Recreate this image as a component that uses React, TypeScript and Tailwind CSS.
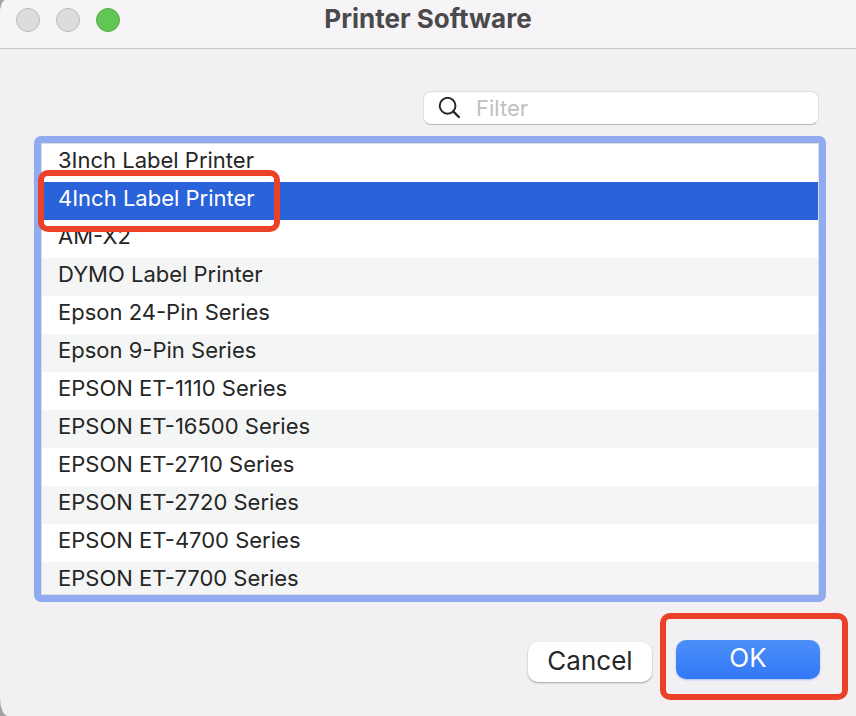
import React, { useState } from 'react';

const PRINTERS = [
  '3Inch Label Printer',
  '4Inch Label Printer',
  'AM-X2',
  'DYMO Label Printer',
  'Epson 24-Pin Series',
  'Epson 9-Pin Series',
  'EPSON ET-1110 Series',
  'EPSON ET-16500 Series',
  'EPSON ET-2710 Series',
  'EPSON ET-2720 Series',
  'EPSON ET-4700 Series',
  'EPSON ET-7700 Series',
];

const TitleBar: React.FC = () => (
  <header className="relative flex h-[49px] shrink-0 items-start justify-center border-b border-[#c9c7ca] bg-[#f7f4f8]">
    <div className="absolute top-2 left-4 flex gap-4">
      <button aria-label="Close" className="size-6 rounded-full border border-[#bcbabd] bg-[#dddbde]" />
      <button aria-label="Minimize" className="size-6 rounded-full border border-[#bcbabd] bg-[#dddbde]" />
      <button aria-label="Zoom" className="size-6 rounded-full border border-[#54ac47] bg-[#62c655]" />
    </div>
    <h1 className="pt-1 text-[26px] leading-[30px] font-bold text-[#4a494b]">Printer Software</h1>
  </header>
);

interface FilterFieldProps {
  value: string;
  onChange: (value: string) => void;
}

const FilterField: React.FC<FilterFieldProps> = ({ value, onChange }) => (
  <label className="mr-[7px] flex h-[34px] w-1/2 max-w-[396px] items-center gap-4 self-end rounded-[8px] border border-[#dfdde0] border-b-[#b9b7ba] bg-white pl-3.5">
    <svg viewBox="0 0 22 22" className="size-[22px] shrink-0" fill="none" stroke="#262626" strokeLinecap="round">
      <circle cx="9.6" cy="8.8" r="7.9" strokeWidth="1.9" />
      <path d="M15.2 14.4 20.8 20" strokeWidth="2.4" />
    </svg>
    <input
      type="text"
      aria-label="Filter"
      placeholder="Filter"
      value={value}
      onChange={(e) => onChange(e.target.value)}
      className="min-w-0 flex-1 bg-transparent text-[22px] leading-7 text-[#262626] outline-none placeholder:text-[#c0c0c0]"
    />
  </label>
);

export default function App() {
  const [filter, setFilter] = useState('');
  const [selected, setSelected] = useState('4Inch Label Printer');

  const visible = PRINTERS.filter((name) => name.toLowerCase().includes(filter.toLowerCase()));

  return (
    <div className="h-screen bg-[#a3a1a4] font-['Inter','Liberation_Sans',sans-serif]">
      <div className="flex h-full flex-col overflow-hidden rounded-tl-[6px_14px] rounded-bl-[8px_18px] bg-[#f3f0f4]">
        <TitleBar />

        <main className="flex min-h-0 flex-1 flex-col pt-[42px] pr-[30px] pb-[34px] pl-[34px]">
          <FilterField value={filter} onChange={setFilter} />

          {/* Printer list with its focus ring */}
          <div className="relative mt-[11px] min-h-0 flex-1 rounded-[7px] bg-[#90abf0] p-[7px]">
            <ul className="h-full overflow-hidden border border-[#dcdcdc] bg-white">
              {visible.map((name) => (
                <li key={name} className="even:bg-[#f4f5f5]">
                  <button
                    aria-pressed={name === selected}
                    onClick={() => setSelected(name)}
                    className={`block h-[38px] w-full pb-1.5 pl-4 text-left text-[22px] leading-8 ${
                      name === selected ? 'bg-[#2962d9] text-white' : 'text-[#262626]'
                    }`}
                  >
                    {name}
                  </button>
                </li>
              ))}
            </ul>
            <div className="pointer-events-none absolute top-[34px] left-1 h-[62px] w-[242px] rounded-[10px] border-6 border-[#ec4129]" />
          </div>

          <div className="mt-[38px] mr-1.5 flex items-start justify-end gap-6">
            <button className="mt-0.5 h-10 w-[124px] rounded-[10px] bg-white pb-0.5 text-[26px] leading-9 text-[#262626] shadow-[0_1px_2px_rgba(0,0,0,0.35)]">
              Cancel
            </button>
            <div className="relative">
              <button className="h-[39px] w-36 rounded-[10px] bg-linear-to-b from-[#4b90f8] to-[#3377f6] pb-1 text-[26px] leading-8 text-white shadow-[0_1px_2px_rgba(51,119,246,0.4)]">
                OK
              </button>
              <div className="pointer-events-none absolute -top-[27px] -right-7 -bottom-[21px] -left-4 rounded-[10px] border-6 border-[#ec4129]" />
            </div>
          </div>
        </main>
      </div>
    </div>
  );
}
